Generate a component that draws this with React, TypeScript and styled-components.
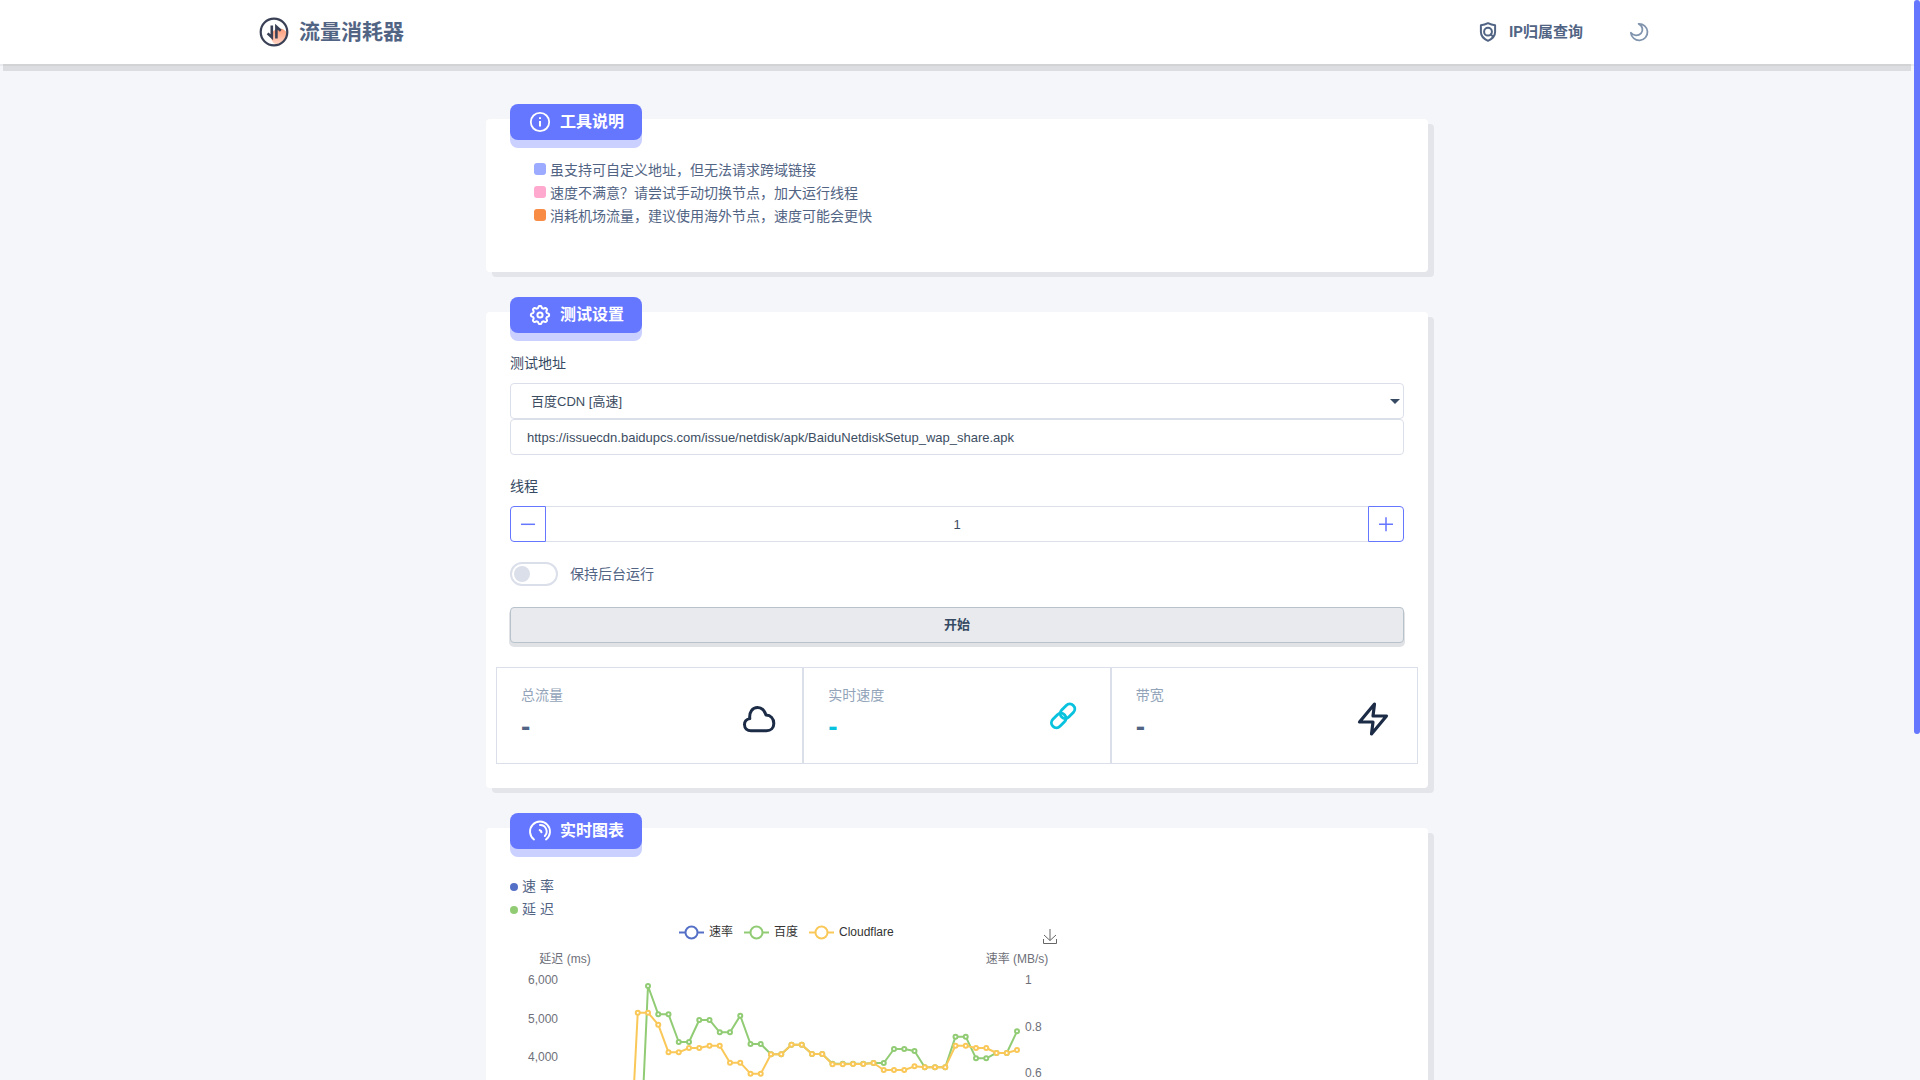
import React, { useState } from "react";
import styled, { createGlobalStyle } from "styled-components";

const color = {
  primary: "#6576ff",
  primarySoft: "#cad0ff",
  text: "#526484",
  heading: "#364a63",
  muted: "#8094ae",
  line: "#dbdfea",
  page: "#f5f6fa",
  cyan: "#09c2de",
  rate: "#5470c6",
  baidu: "#91cc75",
  cloudflare: "#fac858",
};

const GlobalStyle = createGlobalStyle`
  *, *::before, *::after { box-sizing: border-box; }
  html { scrollbar-width: none; }
  body {
    margin: 0;
    padding-right: 6px;
    background: ${color.page};
    color: ${color.text};
    font: 14px/23px "Liberation Sans", "Noto Sans CJK SC", sans-serif;
  }
  button, input, select { font-family: inherit; margin: 0; }
`;

const ScrollRail = styled.div`
  position: fixed;
  inset: 0 0 0 auto;
  width: 6px;
  background: ${color.page};
`;

const ScrollThumb = styled.div`
  height: 68%;
  border-radius: 3px;
  background: ${color.primary};
`;

const Header = styled.header`
  background: #fff;
  box-shadow: 0 2px 0 rgba(31, 43, 58, 0.06), 0 10px 0 -3px rgba(0, 0, 0, 0.1);
`;

const HeaderInner = styled.div`
  max-width: 1400px;
  height: 64px;
  margin: 0 auto;
  padding: 0 2px;
  display: flex;
  align-items: center;
  justify-content: space-between;
`;

const Brand = styled.a`
  display: flex;
  align-items: center;
  gap: 10px;
  color: ${color.text};
  font-size: 21px;
  line-height: 28px;
  font-weight: 700;
  text-decoration: none;
`;

const Nav = styled.nav`
  display: flex;
  align-items: center;
  gap: 46px;
  padding-right: 6px;
`;

const NavLink = styled.a`
  display: flex;
  align-items: center;
  gap: 12px;
  color: ${color.text};
  font-family: Roboto, "Noto Sans CJK SC", sans-serif;
  font-size: 15px;
  font-weight: 700;
  text-decoration: none;
`;

const ThemeButton = styled.button`
  display: flex;
  padding: 0;
  border: 0;
  background: none;
  color: ${color.muted};
  cursor: pointer;
`;

const Main = styled.main`
  max-width: 942px;
  margin: 0 auto;
  padding: 55px 0 120px;
  display: flex;
  flex-direction: column;
  gap: 40px;
`;

const Card = styled.section<{ $bottom: number }>`
  padding: 0 24px ${(p) => p.$bottom}px;
  background: #fff;
  border-radius: 4px;
  box-shadow: 6px 5px 0 #e4e5ea;
`;

const CardTitle = styled.h2<{ $gap: number }>`
  display: flex;
  align-items: center;
  gap: 8px;
  width: fit-content;
  height: 36px;
  margin: -15px 0 ${(p) => p.$gap}px;
  padding: 0 18px;
  border-radius: 8px;
  background: ${color.primary};
  box-shadow: 0 8px 0 ${color.primarySoft};
  color: #fff;
  font-size: 16px;
  line-height: 24px;
  font-weight: 700;
`;

const Notes = styled.ul`
  margin: 0;
  padding: 0 24px;
  list-style: none;
`;

const Note = styled.li`
  display: flex;
  align-items: center;
  gap: 4px;
`;

const Marker = styled.span<{ $color: string; $round?: boolean }>`
  width: ${(p) => (p.$round ? 8 : 12)}px;
  height: ${(p) => (p.$round ? 8 : 12)}px;
  margin-bottom: ${(p) => (p.$round ? 0 : 4)}px;
  border-radius: ${(p) => (p.$round ? "50%" : "3px")};
  background: ${(p) => p.$color};
`;

const Label = styled.label`
  display: block;
  margin-bottom: 8px;
  color: ${color.heading};
`;

const Field = styled.div`
  margin-bottom: 20px;
`;

const SelectWrap = styled.div`
  position: relative;
  &::after {
    content: "";
    position: absolute;
    right: 4px;
    top: 16px;
    border: 5px solid transparent;
    border-top-color: ${color.heading};
    border-bottom-width: 0;
    pointer-events: none;
  }
`;

const Select = styled.select`
  display: block;
  width: 100%;
  height: 36px;
  padding: 0 20px;
  border: 1px solid ${color.line};
  border-radius: 4px;
  background: #fff;
  color: #3c4d62;
  font-size: 13px;
  appearance: none;
`;

const Input = styled.input`
  display: block;
  width: 100%;
  height: 36px;
  padding: 0 16px;
  border: 1px solid ${color.line};
  border-radius: 4px;
  background: #fff;
  color: #3c4d62;
  font-size: 13px;
`;

const Stepper = styled.div`
  display: flex;
`;

const StepInput = styled(Input)`
  flex: 1;
  border-width: 1px 0;
  border-radius: 0;
  text-align: center;
`;

const StepButton = styled.button<{ $side: "left" | "right" }>`
  display: grid;
  place-items: center;
  width: 36px;
  height: 36px;
  padding: 0;
  border: 1px solid ${color.primary};
  border-radius: ${(p) => (p.$side === "left" ? "4px 0 0 4px" : "0 4px 4px 0")};
  background: #fff;
  color: ${color.primary};
  cursor: pointer;
`;

const Toggle = styled.label`
  display: flex;
  align-items: center;
  gap: 12px;
  width: fit-content;
`;

const ToggleInput = styled.input`
  appearance: none;
  display: flex;
  width: 48px;
  height: 24px;
  padding: 2px;
  border: 2px solid ${color.line};
  border-radius: 12px;
  background: #fff;
  &::before {
    content: "";
    width: 16px;
    height: 16px;
    border-radius: 50%;
    background: ${color.line};
  }
  &:checked {
    justify-content: flex-end;
    border-color: ${color.primary};
  }
  &:checked::before { background: ${color.primary}; }
`;

const StartButton = styled.button`
  display: block;
  width: 100%;
  height: 36px;
  margin: 21px 0 24px;
  padding: 0 0 3px;
  border: 1px solid #b7c2cb;
  border-radius: 4px;
  background: #e8eaee;
  box-shadow: 0 3px 0 1px #e0e2e5;
  color: ${color.heading};
  font-size: 13px;
  font-weight: 700;
  cursor: pointer;
`;

const Stats = styled.div`
  display: grid;
  grid-template-columns: repeat(3, 1fr);
  margin: 0 -14px;
`;

const Stat = styled.div`
  display: flex;
  align-items: flex-start;
  justify-content: space-between;
  height: 97px;
  padding: 16px 26px 0 24px;
  border: 1px solid ${color.line};
`;

const StatIcon = styled.div`
  display: flex;
  margin-top: 17px;
`;

const StatLabel = styled.div`
  color: ${color.muted};
  opacity: 0.85;
`;

const StatValue = styled.div<{ $color: string }>`
  margin-top: 4px;
  color: ${(p) => p.$color};
  font-size: 28px;
  line-height: 32px;
  font-weight: 700;
`;

const ChartArea = styled.div`
  width: 564px;
  max-width: 100%;
`;

const Logo = () => (
  <svg width="30" height="30" viewBox="0 0 30 30" fill="none">
    <defs>
      <linearGradient id="logo-glow" x1="0" y1="0" x2="0" y2="1">
        <stop offset="0" stopColor="#ff9a76" />
        <stop offset="1" stopColor="#ffd9cb" />
      </linearGradient>
      <clipPath id="logo-clip"><circle cx="15" cy="15" r="14" /></clipPath>
    </defs>
    <circle cx="20.5" cy="20" r="8.5" fill="url(#logo-glow)" clipPath="url(#logo-clip)" />
    <circle cx="15" cy="15" r="13.3" stroke="#3a4055" strokeWidth="2.2" />
    <path d="M12.8 8.5V20.3L8.6 16.4M17.4 21.5V9.7L21.8 13.7" stroke="#3a4055" strokeWidth="2.6" />
  </svg>
);

const ShieldIcon = () => (
  <svg width="18" height="20" viewBox="0 0 18 20" fill="none" stroke="currentColor" strokeWidth="2" strokeLinecap="round" strokeLinejoin="round">
    <path d="M9 1.2C6.8 2.4 4.3 3.1 1.9 3.2V10c0 4.2 3 7 7.1 8.8 4.1-1.8 7.1-4.6 7.1-8.8V3.2C13.7 3.1 11.2 2.4 9 1.2Z" />
    <circle cx="9" cy="9.7" r="3.9" />
    <path d="M11.6 12.4 13.8 14.2" />
  </svg>
);

const MoonIcon = () => (
  <svg width="20" height="20" viewBox="0 0 20 20" fill="none" stroke="currentColor" strokeWidth="1.8" strokeLinejoin="round">
    <path d="M1.9 10.8A8.3 8.3 0 1 0 9.6 1.8C13.8 3.5 14.5 8.8 12 11.4 9.2 14.3 4.2 14 1.9 10.8Z" />
  </svg>
);

const InfoIcon = () => (
  <svg width="24" height="24" viewBox="0 0 24 24" fill="none" stroke="currentColor" strokeWidth="1.8">
    <circle cx="12" cy="12" r="9.2" />
    <path d="M12 11v5.5M12 7.2v1.7" strokeWidth="2" />
  </svg>
);

const gearPath = (() => {
  const steps = 96;
  const pts = Array.from({ length: steps }, (_, i) => {
    const a = (i / steps) * Math.PI * 2;
    const wave = Math.cos(8 * a);
    const r = 8.1 + 1.05 * Math.tanh(2 * wave);
    return `${(12 + r * Math.sin(a)).toFixed(2)} ${(12 - r * Math.cos(a)).toFixed(2)}`;
  });
  return `M${pts.join("L")}Z`;
})();

const GearIcon = () => (
  <svg width="24" height="24" viewBox="0 0 24 24" fill="none" stroke="currentColor" strokeWidth="2" strokeLinejoin="round">
    <path d={gearPath} />
    <circle cx="12" cy="12" r="2.6" />
  </svg>
);

const GaugeIcon = () => (
  <svg width="24" height="24" viewBox="0 0 24 24" fill="none" stroke="currentColor" strokeWidth="1.9" strokeLinecap="round">
    <path d="M6 20.5A10 10 0 1 1 18 20.5" />
    <path d="M12 6A6.5 6.5 0 0 1 16.8 17" />
    <path d="M11.8 11.2A2.2 2.2 0 0 1 13.4 13.2" strokeWidth="2.2" />
  </svg>
);

const CloudIcon = () => (
  <svg width="36" height="36" viewBox="-1 0 36 36" fill="none" stroke="#1c2b46" strokeWidth="3" strokeLinejoin="round">
    <path d="M8.8 17.6C5.6 18.2 3.5 20.6 3.5 23.6 3.5 27.2 6.3 29.8 10 29.8H25.5C29.8 29.8 32.8 26.8 32.8 22.4 32.8 17.6 29.6 14.4 25 14.1 23.5 9.5 20.5 6.5 16.6 6.5 11.5 6.5 8 11 8.8 17.6Z" />
  </svg>
);

const LinkIcon = () => (
  <svg width="36" height="36" viewBox="0 0 36 36" fill="none" stroke={color.cyan} strokeWidth="2.9">
    <rect x="11.3" y="5.3" width="16.4" height="10" rx="5" transform="rotate(-45 19.5 10.3)" />
    <rect x="2.5" y="14.5" width="16.4" height="10" rx="5" transform="rotate(-45 10.7 19.5)" />
  </svg>
);

const BoltIcon = () => (
  <svg width="36" height="36" viewBox="0 0 24 24" fill="none" stroke="#1c2b46" strokeWidth="2.1" strokeLinejoin="round">
    <path d="M13 2 3 14h9l-1 8 10-12h-9z" />
  </svg>
);

const StepIcon = ({ plus }: { plus?: boolean }) => (
  <svg width="16" height="16" viewBox="0 0 16 16" fill="none" stroke="currentColor" strokeWidth="1.5">
    <path d={plus ? "M1 8.3H15M8 1.3V15.3" : "M1 8.3H15"} />
  </svg>
);

const idle = [0, 0, 0, 0, 0, 0, 0];

const baiduDelay = [
  ...idle, 0, 5843, 5104, 5104, 4383, 4383, 4957, 4957, 4635, 4635, 5070, 4330, 4330, 4061, 4061, 4313, 4313,
  4070, 4070, 3817, 3817, 3817, 3817, 3835, 3835, 4200, 4200, 4148, 3722, 3722, 3722, 4522, 4522, 3957, 3957,
  4096, 4096, 4661,
];

const cloudflareDelay = [
  ...idle, 5148, 5148, 4835, 4113, 4113, 4226, 4226, 4287, 4287, 3843, 3843, 3557, 3557, 4061, 4061, 4313, 4313,
  4070, 4070, 3800, 3800, 3809, 3809, 3835, 3652, 3652, 3652, 3748, 3722, 3722, 3722, 4287, 4287, 4226, 4226,
  4096, 4096, 4174,
];

const plot = { left: 56, right: 507, top: 59, bottom: 289 };
const xAt = (i: number) => plot.left + (i * (plot.right - plot.left)) / (baiduDelay.length - 1);
const yAt = (share: number) => plot.bottom - share * (plot.bottom - plot.top);

const Series = ({ data, stroke }: { data: number[]; stroke: string }) => {
  const points = data.map((v, i) => [xAt(i), yAt(v / 6000)]);
  return (
    <g stroke={stroke} strokeWidth="2" fill="none">
      <polyline points={points.map((p) => p.join(",")).join(" ")} strokeLinejoin="bevel" />
      {points.map(([x, y], i) => (
        <circle key={i} cx={x} cy={y} r="2" fill="#fff" />
      ))}
    </g>
  );
};

const legend = [
  { name: "速率", x: 169, stroke: color.rate },
  { name: "百度", x: 234, stroke: color.baidu },
  { name: "Cloudflare", x: 299, stroke: color.cloudflare },
];

const Chart = () => (
  <svg width="100%" viewBox="0 0 564 349" fontSize="12" fill="#6e7079" role="img" aria-label="实时图表">
    {legend.map((item) => (
      <g key={item.name}>
        <path d={`M${item.x} 11.5h25`} stroke={item.stroke} strokeWidth="2" />
        <circle cx={item.x + 12.5} cy="11.5" r="6" fill="#fff" stroke={item.stroke} strokeWidth="2" />
        <text x={item.x + 30} y="15" fill="#333">{item.name}</text>
      </g>
    ))}
    <path d="M540 8v11.5m-6-5.5 6 5.5 6-5.5M533.5 18v4.5h13V18" fill="none" stroke="#666" />
    <text x="55" y="42" textAnchor="middle">延迟 (ms)</text>
    <text x="507" y="42" textAnchor="middle">速率 (MB/s)</text>
    {["6,000", "5,000", "4,000", "3,000", "2,000", "1,000", "0"].map((t, i) => (
      <text key={t} x="48" y={Math.ceil(yAt(1 - i / 6)) + 4} textAnchor="end">{t}</text>
    ))}
    {["1", "0.8", "0.6", "0.4", "0.2", "0"].map((t, i) => (
      <text key={t} x="515" y={yAt(1 - i / 5) + (i ? 5 : 4)}>{t}</text>
    ))}
    <path d={`M${plot.left} ${plot.bottom}H${plot.right}`} stroke="#6e7079" />
    <Series data={baiduDelay} stroke={color.baidu} />
    <Series data={cloudflareDelay} stroke={color.cloudflare} />
  </svg>
);

const stats = [
  { label: "总流量", color: color.text, icon: <CloudIcon /> },
  { label: "实时速度", color: color.cyan, icon: <LinkIcon /> },
  { label: "带宽", color: color.text, icon: <BoltIcon /> },
];

export default function App() {
  const [threads, setThreads] = useState(1);
  const [address, setAddress] = useState("https://issuecdn.baidupcs.com/issue/netdisk/apk/BaiduNetdiskSetup_wap_share.apk");

  return (
    <>
      <GlobalStyle />
      <Header>
        <HeaderInner>
          <Brand href="#"><Logo />流量消耗器</Brand>
          <Nav>
            <NavLink href="#ip"><ShieldIcon />IP归属查询</NavLink>
            <ThemeButton type="button" aria-label="夜间模式"><MoonIcon /></ThemeButton>
          </Nav>
        </HeaderInner>
      </Header>
      <Main>
        <Card $bottom={44}>
          <CardTitle $gap={19}><InfoIcon />工具说明</CardTitle>
          <Notes>
            <Note><Marker $color="#9cabff" />虽支持可自定义地址，但无法请求跨域链接</Note>
            <Note><Marker $color="#ffa9ce" />速度不满意？请尝试手动切换节点，加大运行线程</Note>
            <Note><Marker $color="#f98c45" />消耗机场流量，建议使用海外节点，速度可能会更快</Note>
          </Notes>
        </Card>

        <Card $bottom={24}>
          <CardTitle $gap={19}><GearIcon />测试设置</CardTitle>
          <Field>
            <Label htmlFor="node">测试地址</Label>
            <SelectWrap>
              <Select id="node">
                <option>百度CDN [高速]</option>
              </Select>
            </SelectWrap>
            <Input aria-label="自定义地址" value={address} onChange={(e) => setAddress(e.target.value)} />
          </Field>
          <Field>
            <Label htmlFor="threads">线程</Label>
            <Stepper>
              <StepButton type="button" $side="left" aria-label="减少" onClick={() => setThreads(Math.max(1, threads - 1))}>
                <StepIcon />
              </StepButton>
              <StepInput id="threads" value={threads} onChange={(e) => setThreads(Number(e.target.value) || 1)} />
              <StepButton type="button" $side="right" aria-label="增加" onClick={() => setThreads(threads + 1)}>
                <StepIcon plus />
              </StepButton>
            </Stepper>
          </Field>
          <Toggle>
            <ToggleInput type="checkbox" />
            保持后台运行
          </Toggle>
          <StartButton type="button">开始</StartButton>
          <Stats>
            {stats.map((s) => (
              <Stat key={s.label}>
                <div>
                  <StatLabel>{s.label}</StatLabel>
                  <StatValue $color={s.color}>-</StatValue>
                </div>
                <StatIcon>{s.icon}</StatIcon>
              </Stat>
            ))}
          </Stats>
        </Card>

        <Card $bottom={24}>
          <CardTitle $gap={26}><GaugeIcon />实时图表</CardTitle>
          <Note as="div"><Marker $round $color={color.rate} />速 率</Note>
          <Note as="div"><Marker $round $color={color.baidu} />延 迟</Note>
          <ChartArea><Chart /></ChartArea>
        </Card>
      </Main>
      <ScrollRail><ScrollThumb /></ScrollRail>
    </>
  );
}
